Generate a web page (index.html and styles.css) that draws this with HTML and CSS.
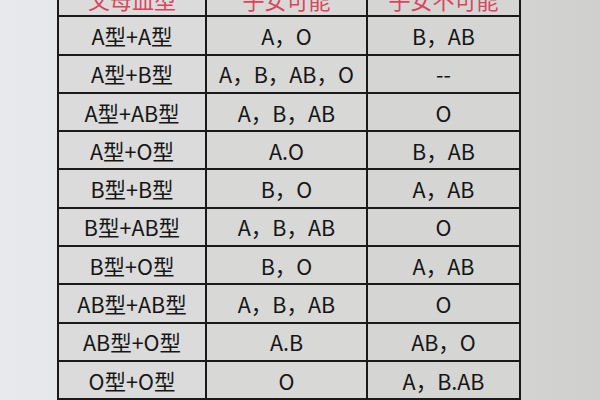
FILE: index.html
```html
<!DOCTYPE html>
<html lang="zh">
<head>
<meta charset="utf-8">
<link rel="stylesheet" href="styles.css">
</head>
<body>
<div class="sheet">
  <div class="grid">
    <div class="cell head c1">父母血型</div>
    <div class="cell head c2">子女可能</div>
    <div class="cell head c3">子女不可能</div>

    <div class="cell c1">A型+A型</div>
    <div class="cell c2">A，O</div>
    <div class="cell c3">B，AB</div>

    <div class="cell c1">A型+B型</div>
    <div class="cell c2">A，B，AB，O</div>
    <div class="cell c3">--</div>

    <div class="cell c1">A型+AB型</div>
    <div class="cell c2">A，B，AB</div>
    <div class="cell c3">O</div>

    <div class="cell c1">A型+O型</div>
    <div class="cell c2">A.O</div>
    <div class="cell c3">B，AB</div>

    <div class="cell c1">B型+B型</div>
    <div class="cell c2">B，O</div>
    <div class="cell c3">A，AB</div>

    <div class="cell c1">B型+AB型</div>
    <div class="cell c2">A，B，AB</div>
    <div class="cell c3">O</div>

    <div class="cell c1">B型+O型</div>
    <div class="cell c2">B，O</div>
    <div class="cell c3">A，AB</div>

    <div class="cell c1">AB型+AB型</div>
    <div class="cell c2">A，B，AB</div>
    <div class="cell c3">O</div>

    <div class="cell c1">AB型+O型</div>
    <div class="cell c2">A.B</div>
    <div class="cell c3">AB，O</div>

    <div class="cell c1">O型+O型</div>
    <div class="cell c2">O</div>
    <div class="cell c3">A，B.AB</div>
  </div>
</div>
</body>
</html>
```

FILE: styles.css
```css
html, body {
  margin: 0;
  padding: 0;
}
body {
  width: 600px;
  height: 400px;
  overflow: hidden;
  background: linear-gradient(90deg, #e7e9ed 0%, #e3e5e8 20%, #d8d8d8 70%, #cfcfcd 100%);
  font-family: "Noto Sans CJK SC", "Noto Sans", sans-serif;
}
.sheet {
  padding-left: 57px;
  margin-top: -23px;
}
.grid {
  display: inline-grid;
  grid-template-columns: 146px 159px 151px;
  grid-auto-rows: 36.3px;
  gap: 2px;
  padding: 2px;
  background: #1a1a1a;
}
.cell {
  display: flex;
  align-items: center;
  justify-content: center;
  font-size: 21.5px;
  font-weight: 400;
  color: #161616;
  white-space: nowrap;
}
.c1 { background: #dbdbdb; }
.c2 { background: #d8d8d7; }
.c3 { background: #d5d5d4; }
.head {
  color: #d8455c;
  font-size: 22px;
  align-items: flex-end;
  line-height: 1;
  padding-bottom: 5px;
  box-sizing: border-box;
}
```
